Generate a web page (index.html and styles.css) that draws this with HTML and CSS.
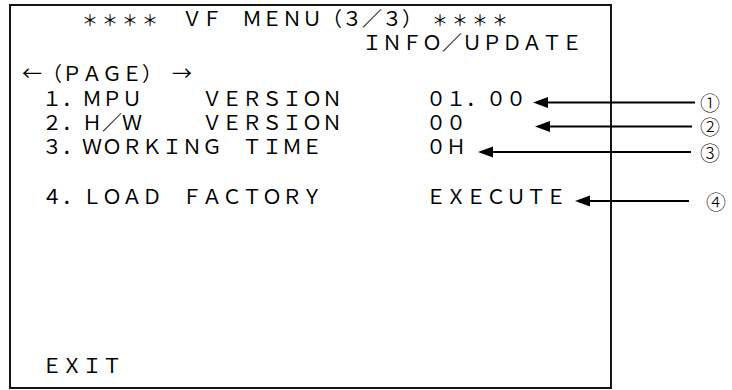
FILE: index.html
```html
<!DOCTYPE html>
<html lang="ja">
<head>
<meta charset="utf-8">
<title>VF MENU (3/3)</title>
<link rel="stylesheet" href="styles.css">
</head>
<body>
<div class="screen">
  <div class="title">　　　<span class="ast">＊＊＊＊</span>　ＶＦ　ＭＥＮＵ（３／３）　<span class="ast">＊＊＊＊</span></div>
  <div class="title sub">　　　　　　　　　　　　　　　　　ＩＮＦＯ／ＵＰＤＡＴＥ</div>
  <div class="row page">←（ＰＡＧＥ）　→</div>
  <div class="row first"><span class="label">　１．ＭＰＵ　　　ＶＥＲＳＩＯＮ</span><span class="value">０１．００</span></div>
  <div class="row"><span class="label">　２．Ｈ／Ｗ　　　ＶＥＲＳＩＯＮ</span><span class="value">００</span></div>
  <div class="row"><span class="label">　３．ＷＯＲＫＩＮＧ　ＴＩＭＥ</span><span class="value">０Ｈ</span></div>
  <div class="row blank"></div>
  <div class="row fourth"><span class="label">　４．ＬＯＡＤ　ＦＡＣＴＯＲＹ</span><span class="value">ＥＸＥＣＵＴＥ</span></div>
  <div class="row exit">　ＥＸＩＴ</div>
</div>
<svg class="callouts" width="732" height="390" viewBox="0 0 732 390">
  <g class="lines">
    <line x1="546" y1="102.5" x2="695" y2="102.5"/>
    <line x1="548" y1="126.5" x2="692" y2="126.5"/>
    <line x1="491" y1="152" x2="691" y2="152"/>
    <line x1="588" y1="201" x2="689" y2="201"/>
  </g>
  <g class="heads">
    <polygon points="533,102.5 548,97 548,108"/>
    <polygon points="535,126.5 550,121 550,132"/>
    <polygon points="478,152 493,146.5 493,157.5"/>
    <polygon points="575,201 590,195.5 590,206.5"/>
  </g>
  <g class="marks">
    <text x="710" y="102">①</text>
    <text x="710" y="126">②</text>
    <text x="710" y="152">③</text>
    <text x="716" y="201">④</text>
  </g>
</svg>
</body>
</html>
```
FILE: styles.css
```css
html, body {
  margin: 0;
  padding: 0;
  background: #fff;
}
body {
  position: relative;
  width: 732px;
  height: 390px;
  overflow: hidden;
  font-family: "Noto Sans CJK JP", "Noto Sans", sans-serif;
  color: #000;
}
.screen {
  box-sizing: border-box;
  width: 603px;
  height: 385px;
  margin: 4px 0 0 9px;
  border: 2px solid #151515;
  padding: 1px 0 10px 11px;
  display: flex;
  flex-direction: column;
  font-size: 20px;
  white-space: pre;
}
.title {
  line-height: 21px;
  height: 21px;
}
.sub {
  margin-top: 3px;
}
.ast {
  font-size: 16px;
  letter-spacing: 4px;
}
.row {
  display: flex;
  line-height: 24px;
  height: 24px;
}
.page {
  margin-top: 9px;
}
.first {
  margin-top: 1px;
}
.fourth {
  margin-top: 2px;
}
.label {
  width: 404px;
}
.exit {
  margin-top: auto;
}
.callouts {
  position: absolute;
  left: 0;
  top: 0;
  pointer-events: none;
}
.lines line {
  stroke: #000;
  stroke-width: 2;
}
.heads polygon {
  fill: #000;
}
.marks text {
  font-family: "Noto Sans CJK JP", "DejaVu Sans", sans-serif;
  font-size: 20px;
  font-weight: 300;
  text-anchor: middle;
  dominant-baseline: central;
  fill: #000;
}
```
